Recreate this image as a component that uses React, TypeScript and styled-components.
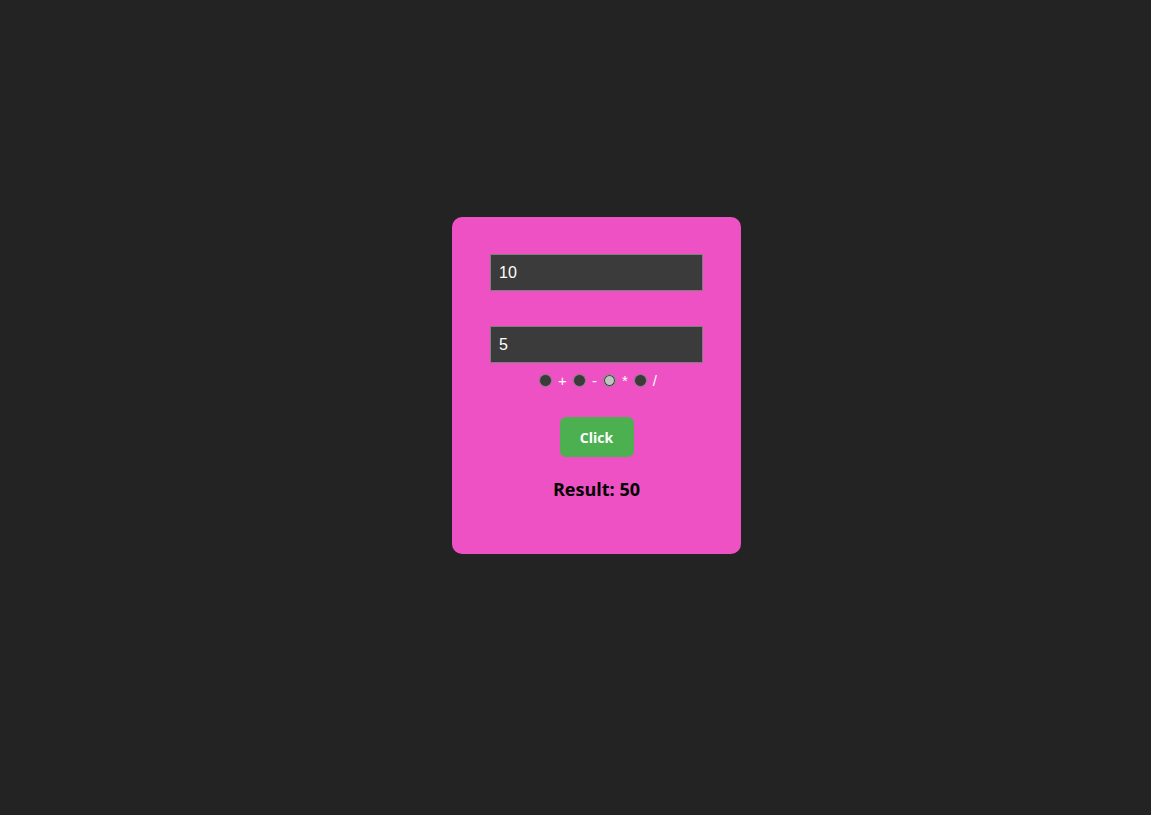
import { useState } from 'react';
import styled, { createGlobalStyle } from 'styled-components';

const GlobalStyle = createGlobalStyle`
   html, body {
      margin: 0;
      padding: 0;
      background-color: #232323;
   }
   #root {
      min-height: 100vh;
   }
`;

const Page = styled.div`
   min-height: 100vh;
   display: flex;
   justify-content: center;
   padding: 217px 0 0 42px;
   box-sizing: border-box;
   font-family: 'Liberation Sans', Arial, sans-serif;
`;

const Card = styled.div`
   width: 289px;
   height: 337px;
   box-sizing: border-box;
   background-color: #ee51c4;
   border-radius: 10px;
   padding: 37px 38px 0;
   display: flex;
   flex-direction: column;
   align-items: center;
`;

const NumberInput = styled.input<{ $gap: number }>`
   width: 213px;
   height: 37px;
   box-sizing: border-box;
   background-color: #3b3b3b;
   border: 1px solid #7f7f7f;
   color: #ffffff;
   font-family: 'Liberation Sans', Arial, sans-serif;
   font-size: 16px;
   padding: 0 8px;
   outline: none;
   margin-bottom: ${(p) => p.$gap}px;
`;

const OperatorRow = styled.div`
   display: flex;
   align-items: center;
   height: 20px;
   margin: 7px 0 0 9px;
`;

const Radio = styled.input`
   appearance: none;
   width: 13px;
   height: 13px;
   margin: 0 6px 0 0;
   border-radius: 50%;
   border: 1px solid #858585;
   background-color: #3b3b3b;
   box-sizing: border-box;

   &:checked {
      background-color: #c3c3c3;
      box-shadow: inset 0 0 0 1px #3b3b3b;
   }
`;

const OperatorLabel = styled.label`
   color: #ffffff;
   font-size: 15px;
   margin-right: 6px;
   line-height: 20px;
   padding-top: 2px;
`;

const ActionButton = styled.button`
   margin-top: 27px;
   width: 74px;
   height: 40px;
   border: none;
   border-radius: 6px;
   background-color: #4caf50;
   color: #ffffff;
   font-family: 'Open Sans', 'Noto Sans', sans-serif;
   font-weight: 700;
   font-size: 14px;
   cursor: pointer;
`;

const ResultText = styled.h3`
   margin: 20px 0 0;
   font-family: 'Open Sans', 'Noto Sans', sans-serif;
   font-weight: 700;
   font-size: 18px;
   color: #000000;
`;

const operators = ['+', '-', '*', '/'];

export default function App(): JSX.Element {
   const [first, setFirst] = useState('10');
   const [second, setSecond] = useState('5');
   const [operator, setOperator] = useState('*');
   const [result, setResult] = useState(50);

   const calculate = () => {
      const a = Number(first);
      const b = Number(second);
      if (operator === '+') setResult(a + b);
      else if (operator === '-') setResult(a - b);
      else if (operator === '*') setResult(a * b);
      else setResult(a / b);
   };

   return (
      <>
         <GlobalStyle />
         <Page>
            <Card>
               <NumberInput $gap={35} value={first} onChange={(e) => setFirst(e.target.value)} />
               <NumberInput $gap={0} value={second} onChange={(e) => setSecond(e.target.value)} />
               <OperatorRow>
                  {operators.map((op, i) => (
                     <span key={op} style={{ display: 'contents' }}>
                        <Radio
                           type="radio"
                           name="operator"
                           id={`op-${i}`}
                           checked={operator === op}
                           onChange={() => setOperator(op)}
                        />
                        <OperatorLabel htmlFor={`op-${i}`}>{op}</OperatorLabel>
                     </span>
                  ))}
               </OperatorRow>
               <ActionButton onClick={calculate}>Click</ActionButton>
               <ResultText>Result: {result}</ResultText>
            </Card>
         </Page>
      </>
   );
}
